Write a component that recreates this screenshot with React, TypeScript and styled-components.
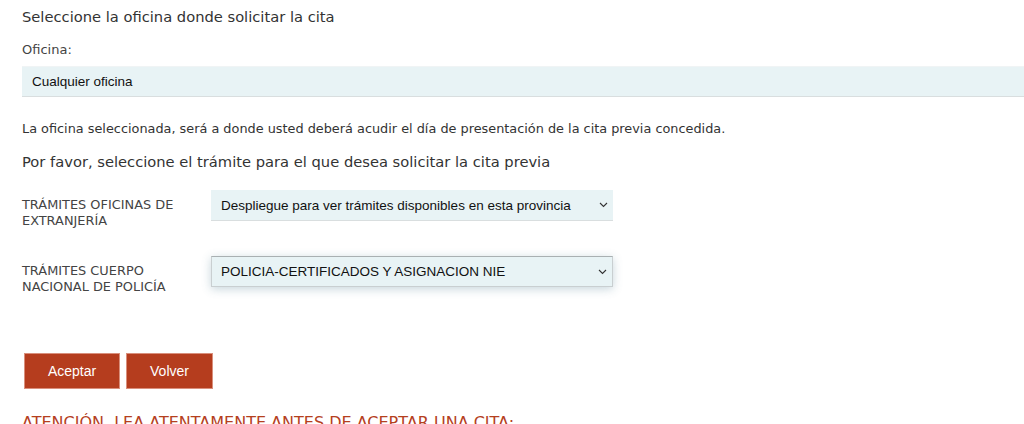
import React from "react";
import styled, { createGlobalStyle } from "styled-components";

const Global = createGlobalStyle`
  html, body { margin: 0; padding: 0; background: #fff; }
  body { font-family: "DejaVu Sans", "Open Sans", sans-serif; color: #333; overflow: hidden; }
  * { box-sizing: border-box; }
`;

const Page = styled.div`
  width: 1024px;
  height: 424px;
  overflow: hidden;
  padding: 7px 0 0 22px;
`;

const Heading = styled.h2<{ $red?: boolean; $mt?: number }>`
  margin: ${(p) => p.$mt ?? 0}px 0 0 0;
  font-family: "DejaVu Sans", sans-serif;
  font-weight: normal;
  font-size: ${(p) => (p.$red ? 16 : 14.7)}px;
  line-height: 20px;
  color: ${(p) => (p.$red ? "#b5401e" : "#333")};
  white-space: nowrap;
`;

const Label = styled.div`
  margin-top: 15px;
  font-family: "DejaVu Sans", sans-serif;
  font-size: 13px;
  line-height: 16px;
  color: #444;
`;

const OfficeBox = styled.div`
  margin-top: 8px;
  height: 31px;
  background: #e8f3f5;
  border-top: 1px solid #f0f4f5;
  border-bottom: 1px solid #d9dedf;
  display: flex;
  align-items: center;
  padding-left: 10px;
  font-family: "Liberation Sans", Arial, sans-serif;
  font-size: 13.5px;
  color: #111;
`;

const Para = styled.p`
  margin: 24px 0 0 0;
  font-family: "DejaVu Sans", sans-serif;
  font-size: 12.85px;
  line-height: 16px;
  color: #333;
  white-space: nowrap;
`;

const Rows = styled.div`
  margin-top: 18px;
  display: flex;
  flex-direction: column;
  gap: 27px;
`;

const Row = styled.div`
  display: grid;
  grid-template-columns: 189px 402px;
  align-items: start;
`;

const RowLabel = styled.div`
  font-family: "DejaVu Sans", sans-serif;
  font-size: 12.9px;
  line-height: 16px;
  color: #444;
  padding-top: 7px;
  white-space: nowrap;
`;

const SelectBox = styled.div<{ $focus?: boolean }>`
  height: 31px;
  background: #e8f3f5;
  display: flex;
  align-items: center;
  justify-content: space-between;
  padding: 0 5px 0 10px;
  font-family: "Liberation Sans", Arial, sans-serif;
  font-size: 13.5px;
  color: #111;
  border-bottom: 1px solid #d9dedf;
  ${(p) =>
    p.$focus
      ? `border: 1px solid #c9cfd1; border-top-color: #a9b0b2; padding-left: 9px; box-shadow: 0 2px 9px rgba(70,120,140,0.3);`
      : ``}
`;

const Chevron = () => (
  <svg width="9" height="6" viewBox="0 0 9 6">
    <path d="M1 1 L4.5 4.5 L8 1" fill="none" stroke="#333" strokeWidth="1.1" />
  </svg>
);

const Buttons = styled.div`
  margin-top: 58px;
  margin-left: 2px;
  display: flex;
  gap: 6px;
`;

const Button = styled.button<{ $w: number }>`
  width: ${(p) => p.$w}px;
  height: 36px;
  background: #b53d1e;
  border: 1px solid #d98f7c;
  color: #fff;
  font-family: "Liberation Sans", Arial, sans-serif;
  font-size: 14px;
  padding: 0;
`;

export default function App() {
  return (
    <>
      <Global />
      <Page>
        <Heading>Seleccione la oficina donde solicitar la cita</Heading>
        <Label>Oficina:</Label>
        <OfficeBox>Cualquier oficina</OfficeBox>
        <Para>
          La oficina seleccionada, será a donde usted deberá acudir el día de presentación de la cita previa concedida.
        </Para>
        <Heading $mt={15}>Por favor, seleccione el trámite para el que desea solicitar la cita previa</Heading>
        <Rows>
          <Row>
            <RowLabel>
              TRÁMITES OFICINAS DE
              <br />
              EXTRANJERÍA
            </RowLabel>
            <SelectBox>
              <span>Despliegue para ver trámites disponibles en esta provincia</span>
              <Chevron />
            </SelectBox>
          </Row>
          <Row>
            <RowLabel>
              TRÁMITES CUERPO
              <br />
              NACIONAL DE POLICÍA
            </RowLabel>
            <SelectBox $focus>
              <span>POLICIA-CERTIFICADOS Y ASIGNACION NIE</span>
              <Chevron />
            </SelectBox>
          </Row>
        </Rows>
        <Buttons>
          <Button $w={96}>Aceptar</Button>
          <Button $w={87}>Volver</Button>
        </Buttons>
        <Heading $red $mt={24}>ATENCIÓN. LEA ATENTAMENTE ANTES DE ACEPTAR UNA CITA:</Heading>
      </Page>
    </>
  );
}
